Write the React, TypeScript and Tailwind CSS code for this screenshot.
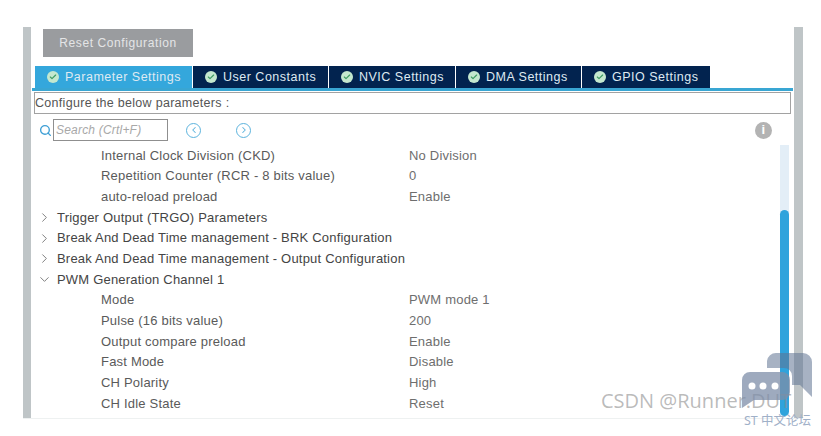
import React from 'react';
import { ChevronRight, ChevronDown, ChevronLeft, Search, Check } from 'lucide-react';

const font = { fontFamily: '"Liberation Sans", Arial, sans-serif' };

const tabs = [
  { label: 'Parameter Settings', width: 'w-[157px]', active: true },
  { label: 'User Constants', width: 'w-[135px]', active: false },
  { label: 'NVIC Settings', width: 'w-[126px]', active: false },
  { label: 'DMA Settings', width: 'w-[125px]', active: false },
  { label: 'GPIO Settings', width: 'w-[128px]', active: false },
];

const rows = [
  { type: 'param', label: 'Internal Clock Division (CKD)', value: 'No Division' },
  { type: 'param', label: 'Repetition Counter (RCR - 8 bits value)', value: '0' },
  { type: 'param', label: 'auto-reload preload', value: 'Enable' },
  { type: 'closed', label: 'Trigger Output (TRGO) Parameters' },
  { type: 'closed', label: 'Break And Dead Time management - BRK Configuration' },
  { type: 'closed', label: 'Break And Dead Time management - Output Configuration' },
  { type: 'open', label: 'PWM Generation Channel 1' },
  { type: 'param', label: 'Mode', value: 'PWM mode 1' },
  { type: 'param', label: 'Pulse (16 bits value)', value: '200' },
  { type: 'param', label: 'Output compare preload', value: 'Enable' },
  { type: 'param', label: 'Fast Mode', value: 'Disable' },
  { type: 'param', label: 'CH Polarity', value: 'High' },
  { type: 'param', label: 'CH Idle State', value: 'Reset' },
];

const TabCheck = () => (
  <span className="w-[12px] h-[12px] rounded-full bg-[#c4e8cf] flex items-center justify-center shrink-0">
    <Check size={8} strokeWidth={3.5} className="text-[#3f9c63]" />
  </span>
);

const NavButton = ({ next }: { next?: boolean }) => (
  <span className="w-[15px] h-[15px] rounded-full border-[1.5px] border-[#5cb3dd] flex items-center justify-center">
    {next ? (
      <ChevronRight size={10} strokeWidth={2.5} className="text-[#5cb3dd]" />
    ) : (
      <ChevronLeft size={10} strokeWidth={2.5} className="text-[#5cb3dd]" />
    )}
  </span>
);

const Row = ({ type, label, value }: { type: string; label: string; value?: string }) => {
  if (type === 'param') {
    return (
      <div className="h-[20.7px] flex items-center text-[#5a5a5a]">
        <span className="w-[378px] pl-[70px] shrink-0">{label}</span>
        <span className="text-[#6e6e6e]">{value}</span>
      </div>
    );
  }
  return (
    <div className="h-[20.7px] flex items-center text-[#444444]">
      <span className="w-[26px] pl-[6px] shrink-0 text-[#777777]">
        {type === 'open' ? <ChevronDown size={15} strokeWidth={1.5} /> : <ChevronRight size={15} strokeWidth={1.5} />}
      </span>
      <span>{label}</span>
    </div>
  );
};

export default function App() {
  return (
    <div style={font} className="relative w-[821px] h-[436px] bg-white overflow-hidden pt-[27px] text-[13px] tracking-[0.2px]">
      <div className="w-[780px] h-[392px] ml-[23px] flex border-b border-[#eef1f1]">
        <div className="w-[8px] bg-[#bfc5c7] shrink-0" />

        <div className="flex-1 min-w-0 flex flex-col">
          <div className="pl-[12px] pt-[2px]">
            <div className="w-[150px] h-[28px] bg-[#9a9c9f] text-[#e4e5e6] flex items-center justify-center text-[12px] tracking-[0.6px]">
              Reset Configuration
            </div>
          </div>

          {/* Onglets */}
          <div className="mt-[9px] pl-[4px] flex h-[22px] gap-[1px]">
            {tabs.map((tab) => (
              <div
                key={tab.label}
                className={`${tab.width} ${tab.active ? 'bg-[#34a7dc]' : 'bg-[#02234f]'} flex items-center pl-[12px] gap-[6px] text-[12.5px] text-[#dfeaf2] tracking-[0.5px]`}
              >
                <TabCheck />
                <span>{tab.label}</span>
              </div>
            ))}
          </div>
          <div className="h-[3px] ml-[1px] mr-[1px] bg-[#39a6d3]" />

          <div className="h-[22px] ml-[3px] mr-[3px] mt-[1px] border border-[#a2a2a2] flex items-center text-[12.5px] text-[#555555] tracking-[0.3px]">
            Configure the below parameters :
          </div>

          <div className="h-[26px] mt-[3px] flex items-center pl-[8px] pr-[22px]">
            <Search size={13} strokeWidth={2.5} className="text-[#3e9fd5] shrink-0" />
            <div className="w-[115px] h-[22px] ml-[1px] border border-[#8f8f8f] flex items-center pl-[2px] italic text-[#a8a8a8] text-[12px]">
              Search (Crtl+F)
            </div>
            <span className="ml-[18px]"><NavButton /></span>
            <span className="ml-[35px]"><NavButton next /></span>
            <span className="ml-auto w-[17px] h-[17px] rounded-full bg-[#b3b3b3] text-white flex items-center justify-center text-[13px] font-bold">i</span>
          </div>

          <div className="flex-1 flex min-h-0 pt-[2px]">
            <div className="flex-1 min-w-0">
              {rows.map((row) => (
                <Row key={row.label} {...row} />
              ))}
            </div>
            <div className="w-[9px] mr-[5px] mb-[2px] bg-[#e3eef7] flex flex-col">
              <div className="h-[65px]" />
              <div className="flex-1 bg-[#2fa3dc] rounded-full" />
            </div>
          </div>
        </div>

        <div className="w-[9px] bg-[#bfc5c7] shrink-0" />
      </div>

      {/* Filigrane */}
      <span className="absolute left-[601px] top-[386px] text-[20px] tracking-[0px] text-[#8d8d8d]/60" style={{ fontFamily: '"Open Sans", sans-serif' }}>
        CSDN @Runner.DUT
      </span>
      <svg className="absolute left-[742px] top-[352px]" width="72" height="60" viewBox="0 0 72 60">
        <path d="M34 1h27a9 9 0 0 1 9 9v35l-12-12h-8v-9a8 8 0 0 0-8-8H25v-7a9 9 0 0 1 9-8z" fill="#5f7391" fillOpacity="0.55" />
        <path d="M8 20h32a8 8 0 0 1 8 8v12a8 8 0 0 1-8 8H12l-12 8V28a8 8 0 0 1 8-8z" fill="#7d8ea8" fillOpacity="0.75" />
        <circle cx="10" cy="34" r="3.5" fill="#fff" />
        <circle cx="21" cy="34" r="3.5" fill="#fff" />
        <circle cx="33" cy="34" r="3.5" fill="#fff" />
      </svg>
      <span className="absolute left-[744px] top-[412px] text-[12.5px] tracking-normal text-[#9fb0c8]" style={{ fontFamily: '"Noto Sans", "Noto Sans CJK SC", sans-serif' }}>
        ST 中文论坛
      </span>
    </div>
  );
}
